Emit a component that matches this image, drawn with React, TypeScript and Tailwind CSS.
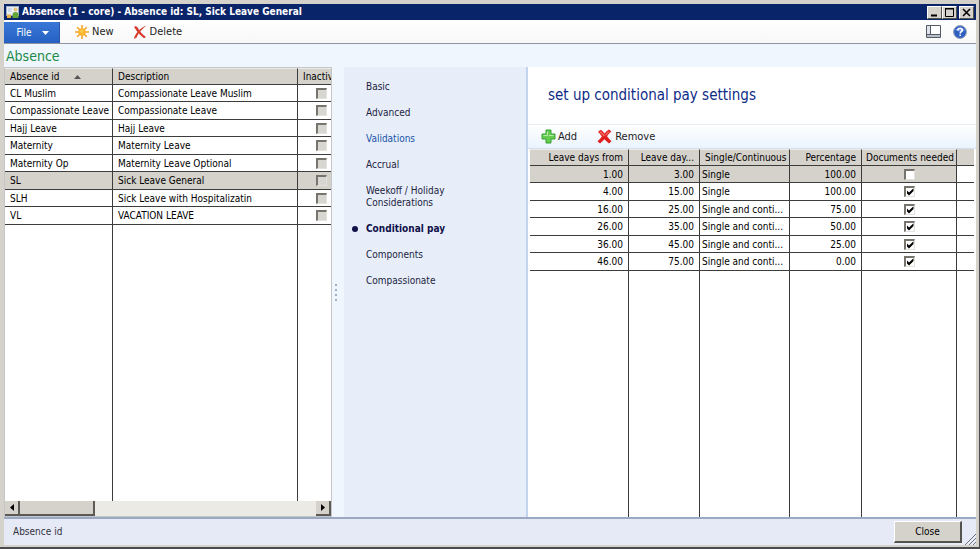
import { useState } from "react";

const ui = "font-['DejaVu_Sans_Condensed','DejaVu_Sans',sans-serif]";

const absences = [
  ["CL Muslim", "Compassionate Leave Muslim"],
  ["Compassionate Leave", "Compassionate Leave"],
  ["Hajj Leave", "Hajj Leave"],
  ["Maternity", "Maternity Leave"],
  ["Maternity Op", "Maternity Leave Optional"],
  ["SL", "Sick Leave General"],
  ["SLH", "Sick Leave with Hospitalizatin"],
  ["VL", "VACATION LEAVE"],
];

const payRows = [
  ["1.00", "3.00", "Single", "100.00", false],
  ["4.00", "15.00", "Single", "100.00", true],
  ["16.00", "25.00", "Single and conti...", "75.00", true],
  ["26.00", "35.00", "Single and conti...", "50.00", true],
  ["36.00", "45.00", "Single and conti...", "25.00", true],
  ["46.00", "75.00", "Single and conti...", "0.00", true],
] as const;

const sections = [
  "Basic",
  "Advanced",
  "Validations",
  "Accrual",
  "Weekoff / Holiday Considerations",
  "Conditional pay",
  "Components",
  "Compassionate",
];

const head =
  "border-r border-b border-t border-r-[#3c3c3c] border-b-[#3c3c3c] border-t-[#eceae4] bg-[#d5d2cc] p-0 font-normal whitespace-nowrap";
const cell = "border-r border-b border-[#3c3c3c] p-0 whitespace-nowrap";
const fill = "border-r border-[#3c3c3c] p-0";

function Tick({ label, on, disabled }: { label: string; on?: boolean; disabled?: boolean }) {
  return (
    <label className="relative mx-auto block size-[11px]">
      <input
        type="checkbox"
        aria-label={label}
        defaultChecked={on}
        disabled={disabled}
        className="peer block size-[11px] appearance-none border border-t-2 border-l-2 border-t-[#77746e] border-l-[#77746e] border-r-[#e4e2dc] border-b-[#e4e2dc] bg-white disabled:bg-[#d8d6d1]"
      />
      <svg viewBox="0 0 11 11" className="pointer-events-none absolute inset-0 hidden size-[11px] peer-checked:block">
        <path d="M3 4.500v3L5 9.500 9.500 5V2.200L5 6.600z" fill="#000" />
      </svg>
    </label>
  );
}

function AppIcon() {
  return (
    <svg viewBox="0 0 14 14" className="size-[14px]" aria-hidden="true">
      <rect x="0.500" y="1.500" width="12" height="9" fill="#e8eef6" stroke="#9db0c8" />
      <path d="M2 4h4M2 6h3" stroke="#b4c3da" />
      <circle cx="9.500" cy="4.500" r="2" fill="#e7c57a" />
      <path d="M6.500 13V9.500Q6.500 7 9.500 7t3 2.500V13z" fill="#63a53b" />
      <path d="M1 9.500h4V13H1z" fill="#e2b34a" />
    </svg>
  );
}

function NewIcon() {
  return (
    <svg viewBox="0 0 14 14" className="size-[14px]" aria-hidden="true">
      <path d="M7 0v14M0 7h14M2.200 2.200l9.600 9.600M11.800 2.200l-9.600 9.600" stroke="#f0a32c" strokeWidth="1.600" />
      <circle cx="7" cy="7" r="3.800" fill="#fbb52c" />
      <circle cx="6.500" cy="6.300" r="1.800" fill="#ffc548" />
    </svg>
  );
}

function DeleteIcon() {
  return (
    <svg viewBox="0 0 14 14" className="size-[14px]" aria-hidden="true">
      <path d="M1 1.800Q3 0.300 4.500 2.500C6.500 6 9.500 9.500 13 12L11 13.200C7.500 10.800 4 7 1 1.800z" fill="#d63a2f" />
      <path d="M13.500 0.600C9.500 3.500 5.500 8 3.300 13L0.800 13.800C2.800 8 7 3 13.500 0.600z" fill="#d9402f" />
    </svg>
  );
}

function AddIcon() {
  return (
    <svg viewBox="0 0 15 15" className="size-[15px]" aria-hidden="true">
      <path d="M5 1h5v4h4v5h-4v4H5v-4H1V5h4z" fill="#66cc50" stroke="#37a035" />
      <path d="M6.500 2.500v4h-4M8 6.500h4.500" stroke="#b9edaa" fill="none" />
    </svg>
  );
}

function RemoveIcon() {
  return (
    <svg viewBox="0 0 15 15" className="size-[15px]" aria-hidden="true">
      <path
        d="M1 2.800L3.800 0.800Q6 2.500 7.500 4.500Q9.500 2.200 12 0.600L14.300 2.500Q12 4.500 10 7.300Q12 10 14.500 12.200L12 14.500Q9.500 12.500 7.400 10.200Q5 12.800 3 14.500L0.500 12.200Q3 10 4.900 7.400Q3 5 1 2.800z"
        fill="#e02020"
      />
      <path d="M3 2.800L7.500 7M12 2.600L8.500 6" stroke="#f2756c" strokeWidth="1.300" />
    </svg>
  );
}

function TitleBar() {
  const box =
    "flex h-[13px] items-center justify-center border border-t-white border-l-white border-r-[#55534e] border-b-[#55534e] bg-[#d5d2cc]";
  return (
    <header className="flex h-4 shrink-0 items-center bg-[#0a246a] pr-[2px] pl-[2px] text-white">
      <AppIcon />
      <h1 className="ml-[2px] flex-1 truncate text-[10px] leading-4 font-bold">
        Absence (1 - core) - Absence id: SL, Sick Leave General
      </h1>
      <button aria-label="Minimize" className={`${box} w-[15px]`}>
        <svg viewBox="0 0 11 11" className="size-[11px]"><path d="M2 8.500h6" stroke="#000" strokeWidth="2" /></svg>
      </button>
      <button aria-label="Maximize" className={`${box} w-[15px]`}>
        <svg viewBox="0 0 11 11" className="size-[11px]"><path d="M1.500 1v8.500h8V1M1 2h9" stroke="#000" fill="none" /><path d="M1 1.500h9" stroke="#000" /></svg>
      </button>
      <button aria-label="Close window" className={`${box} ml-[2px] w-[15px]`}>
        <svg viewBox="0 0 11 11" className="size-[11px]"><path d="M2 2l7 7M9 2l-7 7" stroke="#000" strokeWidth="1.500" /></svg>
      </button>
    </header>
  );
}

function Toolbar() {
  return (
    <div className="flex h-6 shrink-0 items-stretch border-b border-[#8f959c] bg-gradient-to-b from-white to-[#f8f8f8] text-[11px] leading-4 text-[#1d1d1d]">
      <button className="mt-[2px] flex w-14 items-center justify-center gap-[10px] border-r border-[#2a55a8] bg-gradient-to-b from-[#3b78d6] to-[#2560c2] pl-[2px] text-[10px] text-white">
        File
        <svg viewBox="0 0 7 4" className="h-1 w-[7px]" aria-hidden="true"><path d="M0 0h7L3.500 4z" fill="#fff" /></svg>
      </button>
      <button className="ml-[15px] flex items-center gap-[3px]"><NewIcon />New</button>
      <button className="ml-[19px] flex items-center gap-[3px]"><DeleteIcon />Delete</button>
      <div className="flex-1" />
      <button aria-label="Layout" className="mr-3">
        <svg viewBox="0 0 15 13" className="h-[13px] w-[15px]">
          <path d="M0.500 0.500h14v12H0.500z" fill="#fff" stroke="#555b66" />
          <path d="M1 1h3v8H1z" fill="#dfe3ea" />
          <path d="M1 9h13v3H1z" fill="#b9bfc9" /><path d="M4.500 1v8M1 9.500h13" stroke="#555b66" />
        </svg>
      </button>
      <button aria-label="Help" className="mr-[9px]">
        <svg viewBox="0 0 14 14" className="size-[14px]">
          <circle cx="7" cy="7" r="6.400" fill="#2f5dc0" stroke="#8e9bb5" />
          <path d="M2 5Q7 1 12 5Q9 8 2 5z" fill="#7ba0e6" />
          <path d="M4.800 5.400Q5 3.300 7.100 3.300T9.300 5.100Q9.300 6.200 8.200 6.800Q7.200 7.400 7.200 8.500M7.200 9.600v1.500" stroke="#fff" strokeWidth="1.600" fill="none" />
        </svg>
      </button>
    </div>
  );
}

function AbsenceList() {
  const [picked, setPicked] = useState(5);
  return (
    <section className="flex w-[328px] shrink-0 flex-col border border-[#c4c6ca] bg-white">
      <div className="min-h-0 flex-1 overflow-hidden">
        <table className="h-full w-[340px] table-fixed border-separate border-spacing-0 text-[10px] leading-[15px] text-black">
          <colgroup><col className="w-[108px]" /><col className="w-[185px]" /><col /></colgroup>
          <thead>
            <tr className="h-4">
              <th className={`${head} pl-[5px] text-left`}>
                <span className="flex items-center gap-[15px]">
                  Absence id
                  <svg viewBox="0 0 7 4" className="h-1 w-[7px]" aria-hidden="true"><path d="M0 4h7L3.500 0z" fill="#555" /></svg>
                </span>
              </th>
              <th className={`${head} pl-[5px] text-left`}>Description</th>
              <th className={`${head} pl-[5px] text-left`}>Inactiv</th>
            </tr>
          </thead>
          <tbody>
            {absences.map(([id, text], i) => (
              <tr
                key={id}
                onClick={() => setPicked(i)}
                className={`h-[17px] even:h-[18px] ${picked === i ? "bg-[#d5d2cc]" : ""}`}
              >
                <td className={`${cell} pl-[5px]`}>{id}</td>
                <td className={`${cell} pl-[5px]`}>{text}</td>
                <td className={cell}><Tick label={`${id} inactive`} disabled /></td>
              </tr>
            ))}
            <tr><td className={fill} /><td className={fill} /><td className={fill} /></tr>
          </tbody>
        </table>
      </div>
      <div className="flex h-[15px] shrink-0 bg-[#ebeae5]">
        <button aria-label="Scroll left" className="flex w-[15px] items-center justify-center border-r-2 border-b-2 border-[#5b5a55] bg-[#d5d2cc]">
          <svg viewBox="0 0 4 7" className="h-[7px] w-1"><path d="M4 0v7L0 3.500z" fill="#000" /></svg>
        </button>
        <div className="w-[75px] border-r-2 border-b-2 border-[#5b5a55] bg-[#d5d2cc]" />
        <div className="flex-1" />
        <button aria-label="Scroll right" className="flex w-[15px] items-center justify-center border-r-2 border-b-2 border-[#5b5a55] bg-[#d5d2cc]">
          <svg viewBox="0 0 4 7" className="h-[7px] w-1"><path d="M0 0v7L4 3.500z" fill="#000" /></svg>
        </button>
      </div>
    </section>
  );
}

function Sections() {
  return (
    <nav className="w-[184px] shrink-0 border-r-2 border-[#c3d5ec] bg-[#e7eef9] pt-[14px] pr-[70px] pl-[10px] text-[10px] leading-3 text-[#23233f]">
      <ul className="flex flex-col gap-[14px]">
        {sections.map((name) => (
          <li key={name} className="flex items-center">
            <span className="w-3 shrink-0">
              {name === "Conditional pay" && <span className="-ml-[2px] block size-[6px] rounded-full bg-[#10104a]" />}
            </span>
            <a
              href="#"
              className={
                name === "Conditional pay"
                  ? "font-bold whitespace-nowrap text-[#10104a]"
                  : name === "Validations"
                    ? "text-[#1a52a8]"
                    : ""
              }
            >
              {name}
            </a>
          </li>
        ))}
      </ul>
    </nav>
  );
}

function PaySettings() {
  return (
    <main className="flex min-w-0 flex-1 flex-col bg-white">
      <h2 className="h-[57px] shrink-0 pt-[18px] pl-5 text-[15px] leading-5 text-[#0d2c86]">set up conditional pay settings</h2>
      <div className="flex h-[25px] shrink-0 items-center border-y border-t-[#e8ebf0] border-b-[#d5dfed] bg-gradient-to-b from-white to-[#eaf3fd] pl-[13px] text-[11px] leading-4 text-[#1d1d1d]">
        <button className="flex items-center gap-[2px]"><AddIcon />Add</button>
        <button className="ml-[20px] flex items-center gap-[3px]"><RemoveIcon />Remove</button>
      </div>
      <div className="min-h-0 flex-1 pr-[2px] pl-[2px]">
        <table className="h-full w-full table-fixed border-separate border-spacing-0 text-[10px] leading-[15px] text-black">
          <colgroup>
            <col className="w-[99px]" /><col className="w-[71px]" /><col className="w-[90px]" />
            <col className="w-[72px]" /><col className="w-[95px]" /><col />
          </colgroup>
          <thead>
            <tr className="h-4">
              <th className={`${head} pr-[5px] text-right`}>Leave days from</th>
              <th className={`${head} pr-[5px] text-right`}>Leave day...</th>
              <th className={`${head} pl-[5px] text-left`}>Single/Continuous</th>
              <th className={`${head} pr-[5px] text-right`}>Percentage</th>
              <th className={`${head} pl-1 text-left`}>Documents needed</th>
              <th className="border-b border-b-[#3c3c3c] bg-[#d5d2cc] p-0" />
            </tr>
          </thead>
          <tbody>
            {payRows.map(([from, to, kind, percent, docs], i) => {
              const tone = i === 0 ? "bg-[#d5d2cc]" : "";
              return (
                <tr key={from} className="h-[17px] even:h-[18px]">
                  <td className={`${cell} ${tone} pr-[5px] text-right`}>{from}</td>
                  <td className={`${cell} ${tone} pr-[5px] text-right`}>{to}</td>
                  <td className={`${cell} ${tone} pl-[2px]`}>{kind}</td>
                  <td className={`${cell} ${tone} pr-[5px] text-right`}>{percent}</td>
                  <td className={`${cell} ${tone}`}><Tick label={`Documents needed from ${from}`} on={docs} /></td>
                  <td className="border-b border-[#3c3c3c] p-0" />
                </tr>
              );
            })}
            <tr>
              <td className={fill} /><td className={fill} /><td className={fill} /><td className={fill} /><td className={fill} /><td />
            </tr>
          </tbody>
        </table>
      </div>
    </main>
  );
}

export default function App() {
  return (
    <div className="h-screen border-r border-b-2 border-r-[#4a4a4e] border-b-[#4a4a50] bg-[#d5d2cc] pt-1 pr-[3px] pb-[2px] pl-1">
      <div className={`${ui} flex h-full flex-col bg-[#eff6fe]`}>
        <TitleBar />
        <Toolbar />
        <p className="h-[23px] shrink-0 pl-[2px] text-[14px] leading-6 text-[#1c8a48]">Absence</p>
        <div className="flex min-h-0 flex-1">
          <AbsenceList />
          <div className="flex w-3 shrink-0 flex-col items-start justify-center gap-[3px] pl-[3px]">
            {[0, 1, 2, 3].map((n) => <span key={n} className="size-[2px] bg-[#9fb0c4]" />)}
          </div>
          <Sections />
          <PaySettings />
        </div>
        <footer className="flex h-7 shrink-0 items-center border-t-2 border-[#9aa8c2] bg-[#e6eaf7] pl-[9px] text-[10px] leading-4 text-[#33333d]">
          <span className="flex-1">Absence id</span>
          <button className="h-[22px] w-[68px] border-t border-r-2 border-b-2 border-l border-t-white border-l-white border-r-[#55534e] border-b-[#55534e] bg-[#d5d2cc] text-[10px] leading-4 text-black">
            Close
          </button>
          <svg viewBox="0 0 12 12" className="ml-[2px] size-3 self-end" aria-hidden="true">
            <path d="M1 12L12 1M5 12l7-7M9 12l3-3" stroke="#6f7480" />
          </svg>
        </footer>
      </div>
    </div>
  );
}
